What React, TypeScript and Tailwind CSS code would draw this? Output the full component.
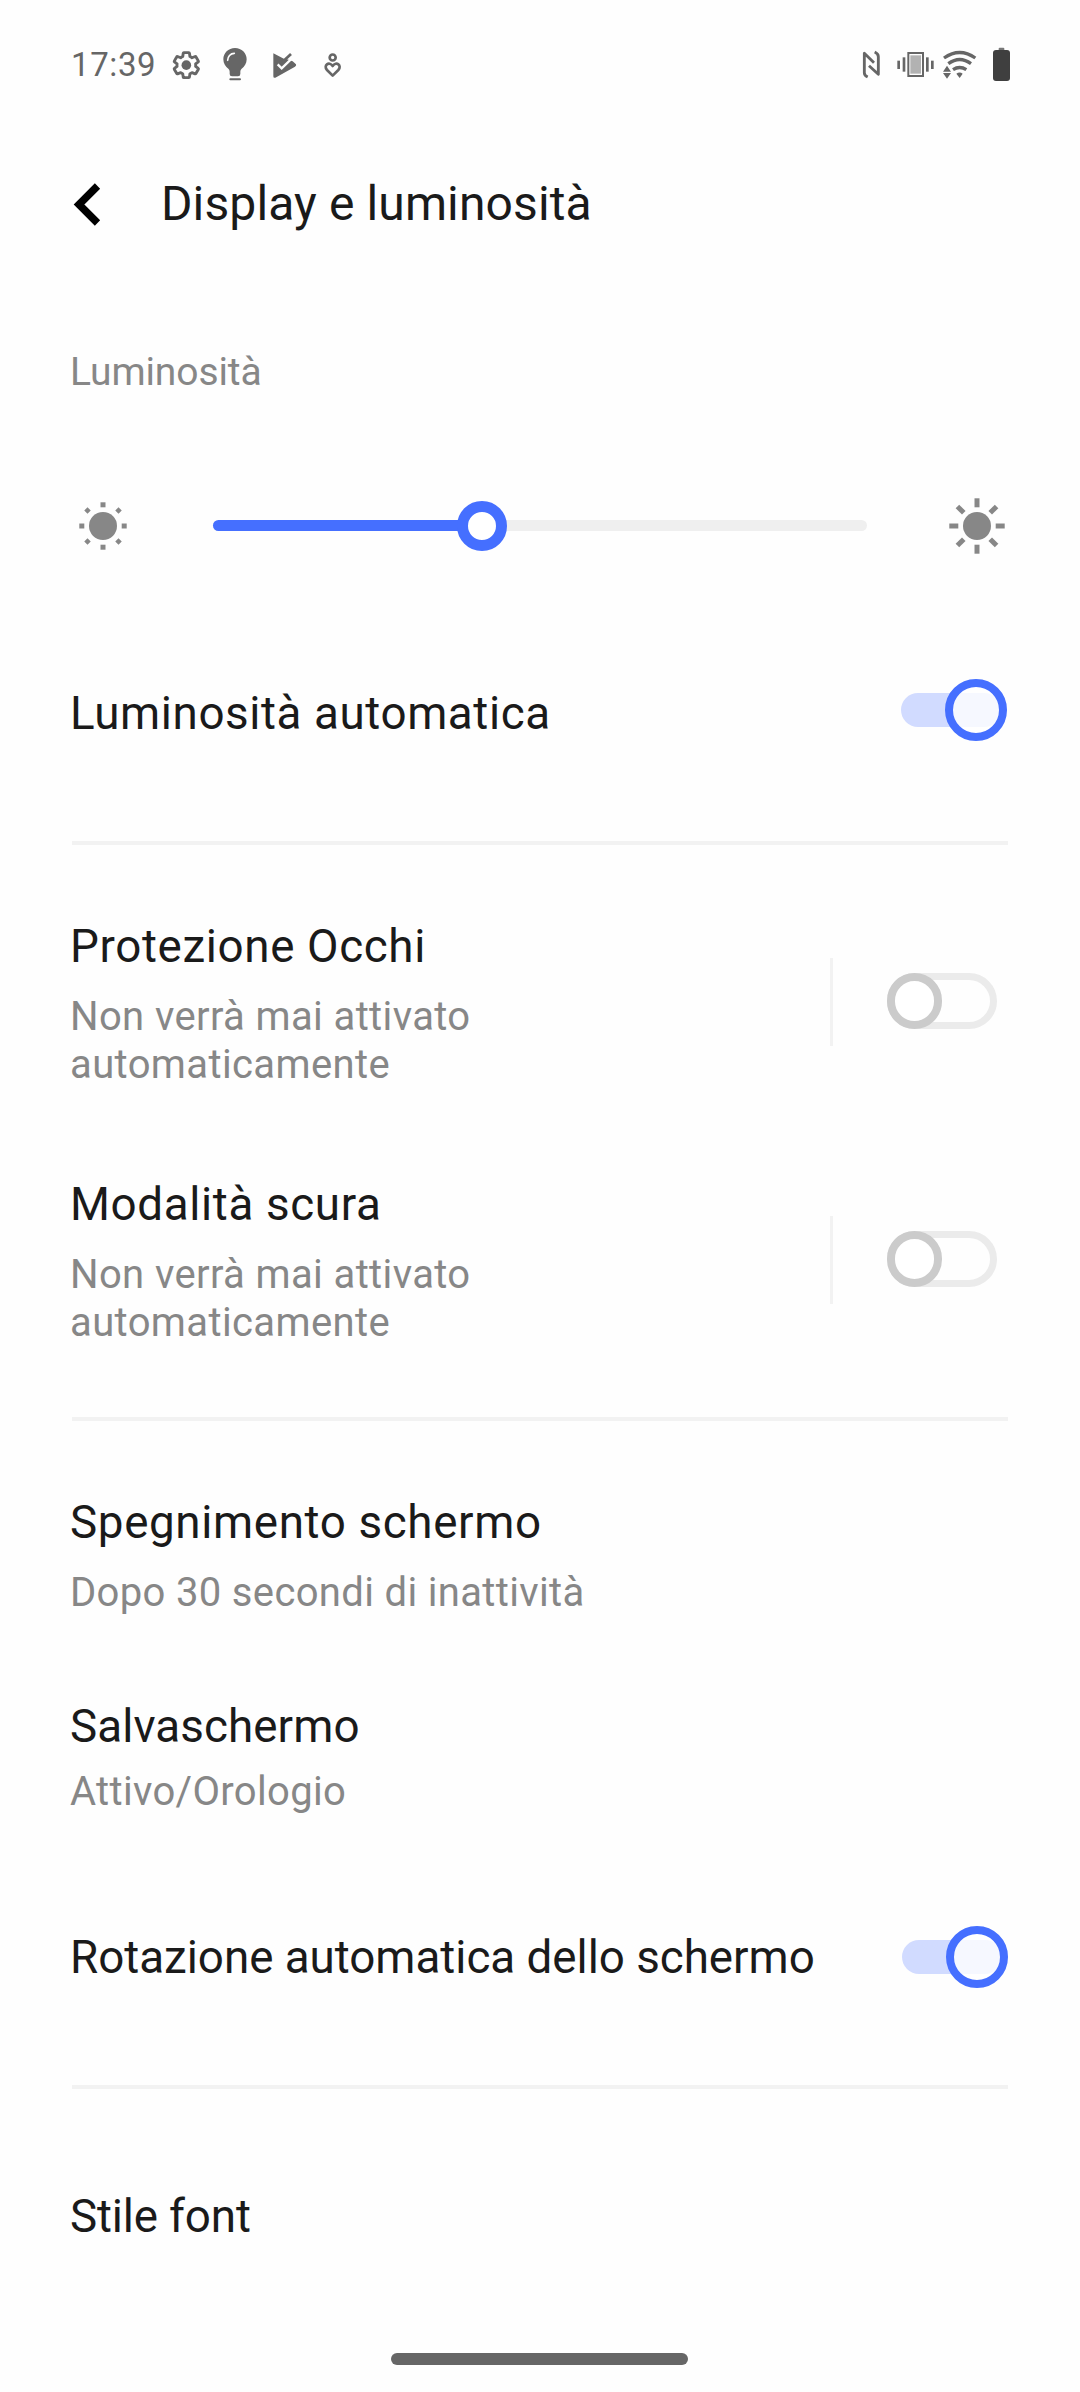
import * as React from 'react';
import { useState } from 'react';
import clsx from 'clsx';

interface SwitchProps {
  checked: boolean;
  onChange: () => void;
  label: string;
}

const Switch = ({ checked, onChange, label }: SwitchProps) => (
  <button
    role="switch"
    aria-checked={checked}
    aria-label={label}
    onClick={onChange}
    className={clsx('relative block shrink-0', checked ? 'h-[62px] w-[106px]' : 'h-14 w-[110px]')}
  >
    {checked ? (
      <>
        <span className="absolute left-0 top-[14px] h-[34px] w-[100px] rounded-full bg-[#d1dbff]" />
        <span className="absolute right-0 top-0 size-[62px] rounded-full border-8 border-[#456fff] bg-white/80" />
      </>
    ) : (
      <>
        <span className="absolute inset-0 rounded-full border-[7px] border-[#ebebeb]" />
        <span className="absolute left-0 top-0 h-14 w-[55px] rounded-full border-8 border-[#cbcbcb] bg-white" />
      </>
    )}
  </button>
);

const Divider = () => <div className="ml-[72px] mr-[72px] h-1 bg-[#f2f2f2]" />;

const StatusBar = () => (
  <div className="flex h-[129px] items-center pl-[71px] pr-[69px] text-[#666666]">
    <span className="w-[100px] text-[33px] leading-[39px] tracking-[0.6px]">17:39</span>
    <svg className="h-[37px] w-[31px]" viewBox="333 48 93 111">
      <g transform="translate(379 105.5) scale(3.9) translate(-12 -12)">
        <path
          fill="none"
          stroke="currentColor"
          strokeWidth="2.2"
          strokeLinejoin="round"
          d="M19.14 12.94c.04-.3.06-.61.06-.94 0-.32-.02-.64-.07-.94l2.03-1.58c.18-.14.23-.41.12-.61l-1.92-3.32c-.12-.22-.37-.29-.59-.22l-2.39.96c-.5-.38-1.03-.7-1.62-.94l-.36-2.54c-.04-.24-.24-.41-.48-.41h-3.84c-.24 0-.43.17-.47.41l-.36 2.54c-.59.24-1.13.57-1.62.94l-2.39-.96c-.22-.08-.47 0-.59.22L2.74 8.87c-.12.21-.08.47.12.61l2.03 1.58c-.05.3-.09.63-.09.94s.02.64.07.94l-2.03 1.58c-.18.14-.23.41-.12.61l1.92 3.32c.12.22.37.29.59.22l2.39-.96c.5.38 1.03.7 1.62.94l.36 2.54c.05.24.24.41.48.41h3.84c.24 0 .44-.17.47-.41l.36-2.54c.59-.24 1.13-.56 1.62-.94l2.39.96c.22.08.47 0 .59-.22l1.92-3.32c.12-.22.07-.47-.12-.61z"
        />
        <circle cx="12" cy="12" r="3.7" fill="currentColor" />
      </g>
    </svg>
    <svg className="ml-5 h-[37px] w-[26px]" viewBox="486 48 78 111">
      <path
        fill="currentColor"
        d="M525 54c20 0 35 15 35 34 0 13-7 22-15 28-3 3-4 6-4 10v6q0 7-7 7h-18q-7 0-7-7v-6c0-4-1-7-4-10-8-6-15-15-15-28 0-19 15-34 35-34z"
      />
      <path d="M503 91c0-11 8-21 20-21" fill="none" stroke="#fefefe" strokeWidth="5" strokeLinecap="round" />
      <path d="M511 148h29" stroke="currentColor" strokeWidth="6" strokeLinecap="round" />
    </svg>
    <svg className="ml-6 h-[37px] w-[25px]" viewBox="636 48 75 111">
      <path
        d="M640 70l33 17 8 1 17 6 10 9q2 4-3 7l-59 33q-6 2-6-4V73z"
        fill="currentColor"
      />
      <path d="M653 103l12 12 34-33" fill="none" stroke="#fefefe" strokeWidth="7" />
      <path d="M663 100l30-28" fill="none" stroke="currentColor" strokeWidth="8" />
    </svg>
    <svg className="ml-[26px] h-[37px] w-[19px]" viewBox="789 48 57 111" fill="none" stroke="currentColor" strokeWidth="8">
      <circle cx="818" cy="82.5" r="9" />
      <path d="M818 137l-17-17c-12-13 6-28 17-12 11-16 29-1 17 12z" strokeLinejoin="round" />
    </svg>

    <div className="ml-auto flex items-center">
      <svg className="h-[37px] w-[25px]" viewBox="60 48 75 111" fill="none" stroke="currentColor" strokeWidth="8.5">
        <path d="M102 98L73 70V128q0 8 10 13" strokeLinejoin="round" />
        <path d="M87 107l28 26V80q0-9-11-14" strokeLinejoin="round" />
      </svg>
      <svg className="ml-[10px] h-[37px] w-[41px]" viewBox="165 48 123 111" fill="currentColor">
        <rect x="205" y="69" width="44" height="69" fill="none" stroke="currentColor" strokeWidth="6" />
        <rect x="211" y="76" width="32" height="55" fill="#b2b2b2" />
        <rect x="188" y="82" width="8" height="43" />
        <rect x="172" y="92" width="8" height="25" />
        <rect x="258" y="82" width="8" height="43" />
        <rect x="273" y="92" width="8" height="25" />
      </svg>
      <svg className="ml-[5px] h-[37px] w-[37px]" viewBox="303 48 111 111" fill="none" stroke="currentColor" strokeWidth="10">
        <path d="M312 84Q359 51 406 84" />
        <path d="M325 101Q359 76 393 101" />
        <path d="M339 119Q359 106 379 119" />
        <path d="M349 131q10-7 19 0l-9 13zM309 125h24l-12-18zM309 129h24l-12 17z" fill="currentColor" stroke="none" />
      </svg>
      <svg className="ml-[14px] h-[37px] w-[19px]" viewBox="456 48 57 111">
        <rect x="476" y="53" width="17" height="12" rx="3" fill="#777777" />
        <rect x="459" y="60" width="51" height="93" rx="9" fill="#3f3f3f" />
      </svg>
    </div>
  </div>
);

const DimIcon = () => (
  <svg className="size-[50px]" viewBox="-25 -25 50 50" fill="#878787">
    <circle r="14" />
    {[0, 90, 180, 270].map((angle) => (
      <rect key={angle} x="-2.5" y="-23.7" width="5" height="5" transform={`rotate(${angle})`} />
    ))}
    {[45, 135, 225, 315].map((angle) => (
      <rect key={angle} x="-2.3" y="-24.2" width="4.6" height="4.6" transform={`rotate(${angle})`} />
    ))}
  </svg>
);

const BrightIcon = () => (
  <svg className="size-[60px]" viewBox="-30 -30 60 60" fill="#878787">
    <circle r="14" />
    {[0, 45, 90, 135, 180, 225, 270, 315].map((angle) => (
      <rect key={angle} x="-2.5" y="-27.7" width="5" height="9" transform={`rotate(${angle})`} />
    ))}
  </svg>
);

const titleClass = 'text-[45.75px] leading-[57px] text-[#1a1a1a]';
const summaryClass = 'text-[40px] leading-[48px] text-[#878787]';

interface SplitRowProps {
  title: string;
  summary: string;
  checked: boolean;
  onChange: () => void;
}

const SplitRow = ({ title, summary, checked, onChange }: SplitRowProps) => (
  <div className="flex h-[258px] items-center">
    <div className="w-[560px] self-start pt-[45px]">
      <h2 className={clsx(titleClass, 'tracking-[0.64px]')}>{title}</h2>
      <p className={clsx(summaryClass, 'mt-[18px] w-[440px] tracking-[0.38px]')}>{summary}</p>
    </div>
    <div className="ml-auto mr-[54px] h-[88px] w-[3px] bg-[#f2f2f2]" />
    <div className="mr-[11px] pb-[2px]">
      <Switch checked={checked} onChange={onChange} label={title} />
    </div>
  </div>
);

export default function App() {
  const [settings, setSettings] = useState({
    autoBrightness: true,
    eyeProtection: false,
    darkMode: false,
    autoRotate: true,
  });

  const toggle = (key: keyof typeof settings) => setSettings((s) => ({ ...s, [key]: !s[key] }));

  return (
    <div className="flex h-[2392px] w-[1080px] flex-col overflow-hidden bg-[#fefefe] font-[Roboto,sans-serif]">
      <StatusBar />

      <header className="flex h-[149px] items-center pl-[72px]">
        <button aria-label="Indietro" className="pt-[2px]">
          <svg className="h-[45px] w-[30px]" viewBox="0 0 30 45" fill="none" stroke="#000000" strokeWidth="7.5">
            <path d="M25.5 4L7 22.5 25.5 41" />
          </svg>
        </button>
        <h1 className="ml-[59px] text-[48px] leading-[57px] tracking-[0.12px] text-[#1a1a1a]">Display e luminosità</h1>
      </header>

      <section className="pl-[70px] pr-[72px]">
        <div className="flex h-[188px] items-center">
          <span className="text-[39px] leading-[48px] tracking-[-0.12px] text-[#878787]">Luminosità</span>
        </div>

        <div className="flex h-[120px] items-center pl-2">
          <DimIcon />
          <div className="relative mb-px ml-[85px] h-[11px] w-[654px] rounded-full bg-[#efefef]">
            <div className="h-full w-[270px] rounded-full bg-[#456fff]" />
            <div className="absolute left-[244px] top-[-19px] size-[50px] rounded-full border-[11px] border-[#456fff] bg-white" />
          </div>
          <div className="ml-20">
            <BrightIcon />
          </div>
        </div>

        <div className="flex h-[255px] items-center justify-between">
          <h2 className={clsx(titleClass, 'tracking-[0.6px]')}>Luminosità automatica</h2>
          <div className="mr-px pb-[7px]">
            <Switch
              checked={settings.autoBrightness}
              onChange={() => toggle('autoBrightness')}
              label="Luminosità automatica"
            />
          </div>
        </div>
      </section>

      <Divider />

      <section className="py-7 pl-[70px] pr-[72px]">
        <SplitRow
          title="Protezione Occhi"
          summary="Non verrà mai attivato automaticamente"
          checked={settings.eyeProtection}
          onChange={() => toggle('eyeProtection')}
        />
        <SplitRow
          title="Modalità scura"
          summary="Non verrà mai attivato automaticamente"
          checked={settings.darkMode}
          onChange={() => toggle('darkMode')}
        />
      </section>

      <Divider />

      <section className="pb-[22px] pl-[70px] pr-[72px] pt-7">
        <div className="h-[212px] pt-[45px]">
          <h2 className={clsx(titleClass, 'tracking-[0.64px]')}>Spegnimento schermo</h2>
          <p className={clsx(summaryClass, 'mt-[18px] tracking-[0.34px]')}>Dopo 30 secondi di inattività</p>
        </div>
        <div className="h-[191px] pt-[37px]">
          <h2 className={clsx(titleClass, 'tracking-[0.08px]')}>Salvaschermo</h2>
          <p className={clsx(summaryClass, 'mt-[13px] tracking-[0.34px]')}>Attivo/Orologio</p>
        </div>
        <div className="flex h-[211px] items-center justify-between">
          <h2 className={clsx(titleClass, 'tracking-[-0.02px]')}>Rotazione automatica dello schermo</h2>
          <div className="pb-px">
            <Switch
              checked={settings.autoRotate}
              onChange={() => toggle('autoRotate')}
              label="Rotazione automatica dello schermo"
            />
          </div>
        </div>
      </section>

      <Divider />

      <section className="pl-[70px] pr-[72px] pt-[22px]">
        <div className="flex h-[211px] items-center">
          <h2 className={clsx(titleClass, 'tracking-[-0.15px]')}>Stile font</h2>
        </div>
      </section>

      <div className="ml-[391px] mt-[31px] h-[12px] w-[297px] rounded-full bg-[#666666]" />
    </div>
  );
}
